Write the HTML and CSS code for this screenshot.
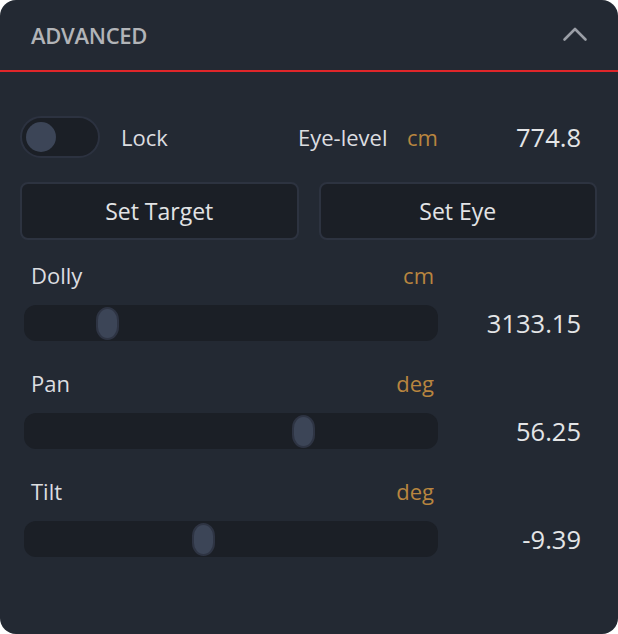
FILE: index.html
```html
<!DOCTYPE html>
<html>
<head>
<meta charset="utf-8">
<link rel="stylesheet" href="styles.css">
</head>
<body>
<div class="panel">
  <div class="header">
    <span class="title">ADVANCED</span>
    <svg class="chevron" width="26" height="16" viewBox="0 0 26 16">
      <polyline points="2.5,13.5 13,3 23.5,13.5" fill="none" stroke="#9a9ea6" stroke-width="2.6" stroke-linecap="round" stroke-linejoin="round"/>
    </svg>
  </div>
  <div class="body">
    <div class="row1">
      <div class="toggle"><div class="knob"></div></div>
      <span class="lock">Lock</span>
      <span class="eye">Eye-level</span>
      <span class="unit">cm</span>
      <span class="value">774.8</span>
    </div>
    <div class="buttons">
      <button class="btn">Set Target</button>
      <button class="btn">Set Eye</button>
    </div>
    <div class="slider">
      <div class="labels"><span class="label">Dolly</span><span class="unit">cm</span></div>
      <div class="track"><div class="thumb" style="left:72px"></div></div>
      <div class="value">3133.15</div>
    </div>
    <div class="slider">
      <div class="labels"><span class="label">Pan</span><span class="unit">deg</span></div>
      <div class="track"><div class="thumb" style="left:268px"></div></div>
      <div class="value">56.25</div>
    </div>
    <div class="slider">
      <div class="labels"><span class="label">Tilt</span><span class="unit">deg</span></div>
      <div class="track"><div class="thumb" style="left:168px"></div></div>
      <div class="value">-9.39</div>
    </div>
  </div>
</div>
</body>
</html>
```
FILE: styles.css
```css
html, body {
  margin: 0;
  padding: 0;
  background: #ffffff;
}
body {
  font-family: "Open Sans", "Noto Sans", sans-serif;
}
.panel {
  width: 618px;
  height: 634px;
  background: #232933;
  border-radius: 16px;
  overflow: hidden;
  box-sizing: border-box;
}
.header {
  height: 70px;
  border-bottom: 2px solid #e0262a;
  display: flex;
  align-items: center;
  justify-content: space-between;
  padding: 0 30px 0 31px;
}
.title {
  font-size: 22px;
  font-weight: 600;
  color: #b2b4b8;
  letter-spacing: -0.3px;
}
.chevron {
  display: block;
  margin-bottom: 2px;
}
.body {
  padding: 44px 21px 0 20px;
}
.row1 {
  display: flex;
  align-items: center;
  height: 42px;
  padding-right: 16px;
  font-size: 22px;
}
.toggle {
  width: 80px;
  height: 42px;
  box-sizing: border-box;
  border: 2px solid #2c3240;
  background: #1b1f26;
  border-radius: 21px;
  display: flex;
  align-items: center;
  padding: 0 4px;
}
.knob {
  width: 30px;
  height: 30px;
  border-radius: 50%;
  background: #3c4557;
}
.lock {
  color: #dcdde0;
  margin-left: 21px;
  width: 177px;
}
.eye {
  color: #dcdde0;
  width: 109px;
}
.unit {
  color: #b8853f;
  font-size: 22px;
}
.row1 .value {
  flex: 1;
  text-align: right;
  color: #e4e5e7;
  font-size: 25.5px;
}
.buttons {
  display: grid;
  grid-template-columns: 1fr 1fr;
  column-gap: 20px;
  margin-top: 24px;
}
.btn {
  height: 58px;
  box-sizing: border-box;
  border: 2px solid #2d3340;
  background: #1b1f26;
  border-radius: 8px;
  font-family: "Open Sans", "Noto Sans", sans-serif;
  font-size: 23px;
  color: #e2e3e5;
  padding: 0;
}
.slider {
  display: grid;
  grid-template-columns: 414px 1fr;
  grid-template-rows: 30px 36px;
  row-gap: 15px;
  margin-left: 4px;
  padding-right: 16px;
  margin-top: 27px;
}
.buttons + .slider {
  margin-top: 20px;
}
.labels {
  grid-column: 1;
  grid-row: 1;
  display: flex;
  justify-content: space-between;
  align-items: center;
  padding: 0 4px 0 7px;
  line-height: 30px;
}
.label {
  color: #dcdde0;
  font-size: 22px;
}
.track {
  grid-column: 1;
  grid-row: 2;
  position: relative;
  background: #1b1f26;
  border-radius: 12px;
}
.thumb {
  position: absolute;
  top: 2px;
  width: 23px;
  height: 33px;
  box-sizing: border-box;
  border: 2px solid #2e3443;
  background: #3c4557;
  border-radius: 11.5px / 13px;
}
.slider .value {
  grid-column: 2;
  grid-row: 2;
  align-self: center;
  text-align: right;
  color: #e4e5e7;
  font-size: 25.5px;
}
```
